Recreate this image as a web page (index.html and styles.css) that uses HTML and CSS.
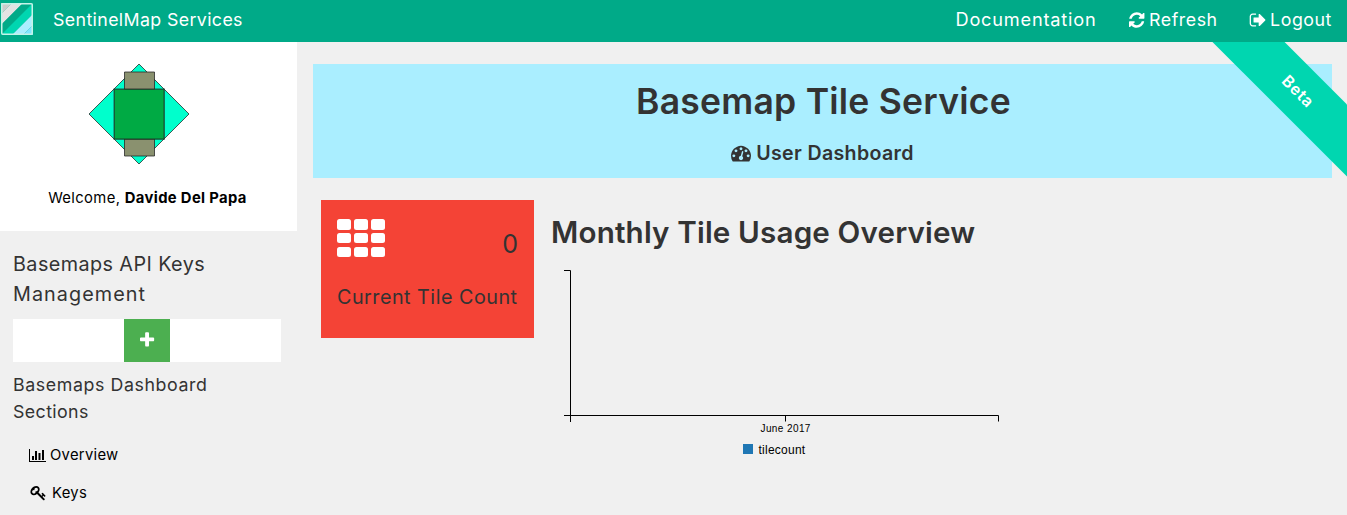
FILE: index.html
```html
<!DOCTYPE html>
<html lang="en">
<head>
<meta charset="utf-8">
<title>SentinelMap Services</title>
<link rel="stylesheet" href="styles.css">
</head>
<body>
<header class="topbar">
  <svg class="logo" viewBox="0 0 32 32">
    <path fill="#ccc" d="M0 0h11L0 11z"/>
    <path fill="#e3e3e3" d="M11 0h11L0 22V11z"/>
    <path fill="#00aa88" d="M22 0h10L0 32V22z"/>
    <path fill="#00d6b0" d="M32 0v11L11 32H0z"/>
    <path fill="#aef" d="M32 11v11L22 32H11z"/>
    <path fill="#80e5ff" d="M32 22v10H22z"/>
    <rect x=".75" y=".75" width="30.5" height="30.5" rx="1" fill="none" stroke="#c5f3e8" stroke-width="1.5"/>
  </svg>
  <span class="brand">SentinelMap Services</span>
  <nav class="links">
    <a class="doc">Documentation</a>
    <a class="refresh"><svg class="fa" viewBox="128 0 1536 1792"><path d="M1639 1056q0 5-1 7-64 268-268 434.500t-478 166.500q-146 0-282.500-55t-243.500-157l-129 129q-19 19-45 19t-45-19-19-45v-448q0-26 19-45t45-19h448q26 0 45 19t19 45-19 45l-137 137q71 66 161 102t187 36q134 0 250-65t186-179q11-17 53-117 8-23 30-23h192q13 0 22.500 9.500t9.500 22.500zm25-800v448q0 26-19 45t-45 19h-448q-26 0-45-19t-19-45 19-45l138-138q-148-137-349-137-134 0-250 65t-186 179q-11 17-53 117-8 23-30 23h-199q-13 0-22.500-9.500t-9.500-22.500v-7q65-268 270-434.500t480-166.500q146 0 284 55.500t245 156.500l130-129q19-19 45-19t45 19 19 45z"/></svg><span>Refresh</span></a>
    <a class="logout"><svg class="fa" viewBox="96 0 1536 1792"><path d="M704 1440q0 4 1 20t.5 26.500-3 23.500-10 19.500-20.500 6.500h-320q-119 0-203.500-84.500t-84.500-203.500v-704q0-119 84.500-203.500t203.500-84.500h320q13 0 22.500 9.500t9.500 22.500q0 4 1 20t.5 26.500-3 23.500-10 19.500-20.500 6.500h-320q-66 0-113 47t-47 113v704q0 66 47 113t113 47h312l11.500 1 11.500 3 8 5.500 7 9 2 13.500zm928-544q0 26-19 45l-544 544q-19 19-45 19t-45-19-19-45v-288h-448q-26 0-45-19t-19-45v-384q0-26 19-45t45-19h448v-288q0-26 19-45t45-19 45 19l544 544q19 19 19 45z"/></svg><span>Logout</span></a>
  </nav>
</header>
<div class="page">
  <aside class="sidebar">
    <div class="profile">
      <svg class="avatar" viewBox="0 0 100 100">
        <g stroke="#222" stroke-opacity=".75">
          <path fill="#00ffcc" d="M50 0 100 50 50 100 0 50z"/>
          <path fill="#8a916f" d="M35.500 8h30v17.500h-30zM35.500 75h30v17h-30z"/>
          <path fill="#00aa44" stroke-width="1.300" d="M25.200 25.200h50v50h-50z"/>
        </g>
      </svg>
      <p class="welcome">Welcome, <b>Davide Del Papa</b></p>
    </div>
    <h4 class="side-title">Basemaps API Keys<br><span class="wide">Management</span></h4>
    <div class="keybar"><button class="add"><svg class="fa" viewBox="192 0 1408 1792"><path d="M1600 736v192q0 40-28 68t-68 28h-416v416q0 40-28 68t-68 28h-192q-40 0-68-28t-28-68v-416h-416q-40 0-68-28t-28-68v-192q0-40 28-68t68-28h416v-416q0-40 28-68t68-28h192q40 0 68 28t28 68v416h416q40 0 68 28t28 68z"/></svg></button></div>
    <h5 class="side-subtitle">Basemaps Dashboard<br><span class="narrow">Sections</span></h5>
    <a class="item"><svg class="bars" viewBox="0 0 17 13"><path d="M0 0h1v12h16v1H0zM3 7h2v4H3zM6 2h2v9H6zM9.500 4h2v7h-2zM13 1h2v10h-2z"/></svg><span class="overview">Overview</span></a>
    <a class="item keys"><svg class="key" viewBox="64 128 1664 1664"><path d="M832 512q0-80-56-136t-136-56-136 56-56 136q0 42 19 83-41-19-83-19-80 0-136 56t-56 136 56 136 136 56 136-56 56-136q0-42-19-83 41 19 83 19 80 0 136-56t56-136zm851 704q0 17-49 66t-66 49q-9 0-28.500-16t-36.500-33-38.500-40-24.500-26l-96 96 220 220q28 28 28 68 0 42-39 81t-81 39q-40 0-68-28l-671-671q-176 131-365 131-163 0-265.500-102.500t-102.500-265.500q0-160 95-313t248-248 313-95q163 0 265.500 102.500t102.500 265.500q0 189-131 365l355 355 96-96q-3-3-26-24.500t-40-38.500-33-36.500-16-28.500q0-17 49-66t66-49q13 0 23 10 6 6 46 44.500t82 79.500 86.500 86 73 78 28.500 41z"/></svg><span>Keys</span></a>
  </aside>
  <main class="main">
    <section class="hero">
      <h1 class="hero-title">Basemap Tile Service</h1>
      <h4 class="hero-sub"><svg class="fa" viewBox="0 0 1792 1792"><path d="M384 1152q0-53-37.500-90.500t-90.500-37.500-90.500 37.500-37.500 90.500 37.500 90.500 90.500 37.500 90.500-37.500 37.500-90.500zm192-448q0-53-37.500-90.500t-90.500-37.500-90.500 37.500-37.500 90.500 37.500 90.500 90.500 37.500 90.500-37.500 37.500-90.500zm428 481l101-382q6-26-7.500-48.500t-38.500-29.500-48 6.500-30 39.500l-101 382q-60 5-107 43.500t-63 98.500q-20 77 20 146t117 89 146-20 89-117q16-60-6-117t-72-91zm660-33q0-53-37.500-90.500t-90.500-37.500-90.500 37.500-37.500 90.500 37.500 90.500 90.500 37.500 90.500-37.500 37.500-90.500zm-640-640q0-53-37.500-90.500t-90.500-37.500-90.500 37.500-37.500 90.500 37.500 90.500 90.500 37.500 90.500-37.500 37.500-90.500zm448 192q0-53-37.500-90.500t-90.500-37.500-90.500 37.500-37.500 90.500 37.500 90.500 90.500 37.500 90.500-37.500 37.500-90.500zm320 448q0 261-141 483-19 29-54 29h-1402q-35 0-54-29-141-221-141-483 0-182 71-348t191-286 286-191 348-71 348 71 286 191 191 286 71 348z"/></svg><span>User Dashboard</span></h4>
    </section>
    <section class="panels">
      <div class="card">
        <div class="card-top">
          <div class="grid"><i></i><i></i><i></i><i></i><i></i><i></i><i></i><i></i><i></i></div>
          <span class="count">0</span>
        </div>
        <div class="card-label">Current Tile Count</div>
      </div>
      <div class="usage">
        <h2 class="usage-title">Monthly Tile Usage Overview</h2>
        <svg class="chart" viewBox="0 0 460 200">
          <path fill="none" stroke="#000" d="M13 5.500h6.500v145.500M13 150.500h434.500v6M19.500 150v7M234.500 150v6.500"/>
          <text class="tick" x="209.500" y="167">June 2017</text>
          <path fill="#1f77b4" d="M192 179h10v10h-10z"/>
          <text class="legend" x="207.500" y="189">tilecount</text>
        </svg>
      </div>
    </section>
    <div class="ribbon">Beta</div>
  </main>
</div>
</body>
</html>
```
FILE: styles.css
```css
* { box-sizing: border-box; }
body { margin: 0; height: 515px; overflow: hidden; background: #f0f0f0; color: #000; font-family: Inter, "Noto Sans", sans-serif; font-size: 14.8px; }
h1, h2, h4, h5, p { margin: 0; }
svg { display: block; flex: none; overflow: visible; }
.fa { fill: currentColor; height: 18px; }
.topbar { position: relative; z-index: 2; display: flex; align-items: flex-start; height: 42px; background: #00aa88; color: #fff; font-size: 17.8px; line-height: 40px; padding-right: 15px; }
.logo { width: 32px; height: 32px; margin: 3px 0 0 1px; }
.brand { margin-left: 20px; letter-spacing: 0.37px; }
.links { display: flex; margin-left: auto; gap: 32px; letter-spacing: 0.55px; }
.links a { display: flex; align-items: center; gap: 5px; height: 40px; }
.links .doc { font-size: 18.2px; line-height: 39px; height: 39px; letter-spacing: 0.8px; }
.page { display: flex; height: 473px; }
.sidebar { width: 297px; flex: none; color: #333; }
.profile { height: 189px; background: #fff; color: #000; padding-top: 22px; text-align: center; }
.avatar { width: 100px; height: 100px; margin: 0 auto 0 89px; }
.welcome { margin-top: 22px; line-height: 24px; padding-right: 2px; letter-spacing: 0.36px; }
.side-title { margin: 18px 13px 0; font-weight: 400; font-size: 19.8px; line-height: 30px; letter-spacing: 0.42px; }
.wide { letter-spacing: 1.07px; }
.keybar { display: flex; margin: 10px 16px 0 13px; height: 43px; background: #fff; padding-left: 111px; }
.add { display: flex; justify-content: center; align-items: center; width: 46px; height: 43px; padding: 0 0 2px; border: 0; background: #4caf50; color: #fff; }
.side-subtitle { margin: 9px 13px 0; font-weight: 400; font-size: 17.8px; line-height: 27px; letter-spacing: 0.59px; }
.narrow { letter-spacing: 0.4px; }
.item { display: flex; align-items: center; height: 38px; margin-top: 11px; padding-left: 29px; gap: 4px; color: #000; letter-spacing: 0.29px; }
.keys { margin-top: 0; padding-left: 31px; gap: 6px; }
.bars { width: 17px; height: 13px; }
.key { width: 15px; height: 15px; }
.main { position: relative; flex: 1; overflow: hidden; padding: 22px 15px 0 16px; color: #333; }
.hero { height: 114px; background: #aaeeff; text-align: center; }
.hero-title { padding: 10px 0 0 2px; font-size: 35.5px; line-height: 55px; font-weight: 600; letter-spacing: 0.24px; }
.hero-sub { display: flex; justify-content: center; align-items: center; gap: 5px; margin-top: 9px; line-height: 30px; font-size: 19.6px; font-weight: 600; letter-spacing: 0.33px; }
.hero-sub .fa { height: 20px; }
.panels { display: flex; gap: 17px; padding: 22px 0 0 8px; }
.card { width: 213px; height: 138px; background: #f44336; padding: 19px 16px 0; }
.card-top { display: flex; justify-content: space-between; height: 63px; }
.grid { display: grid; grid-template-columns: repeat(3, 14px); grid-auto-rows: 10.600px; gap: 3.300px 3px; }
.grid i { border-radius: 2.500px; background: #fff; }
.count { font-size: 25px; line-height: 50px; }
.card-label { font-size: 19.8px; line-height: 30px; white-space: nowrap; letter-spacing: 0.48px; }
.usage-title { font-size: 29.6px; font-weight: 600; line-height: 45px; margin-top: 10px; white-space: nowrap; letter-spacing: 0.17px; }
.chart { width: 460px; height: 200px; margin-top: 10px; }
.tick { font: 10px "Liberation Sans", sans-serif; letter-spacing: 0.4px; }
.legend { font: 12px "Liberation Sans", sans-serif; letter-spacing: 0.25px; }
.ribbon { position: absolute; left: 850.500px; top: 24px; width: 300px; height: 51px; line-height: 50px; text-align: center; transform: rotate(45deg); background: #00d6b0; color: #fff; font-size: 16px; font-weight: 600; letter-spacing: 0.8px; }
```
